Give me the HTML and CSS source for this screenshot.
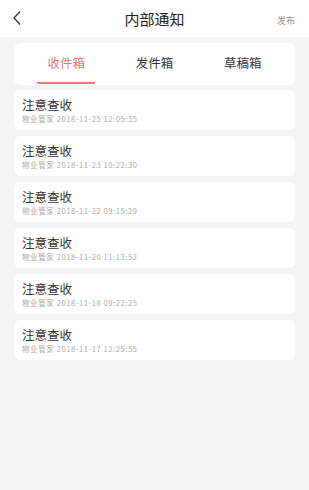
FILE: index.html
```html
<!DOCTYPE html>
<html>
<head>
<meta charset="utf-8">
<link rel="stylesheet" href="styles.css">
</head>
<body>
<div class="header">
  <svg class="back" width="10" height="16" viewBox="0 0 10 16"><path d="M8 1.5 L2 8 L8 14.5" fill="none" stroke="#333" stroke-width="1.3"/></svg>
  <div class="title">内部通知</div>
  <div class="publish">发布</div>
</div>
<div class="main">
  <div class="tabs">
    <div class="tab active"><span>收件箱</span></div>
    <div class="tab"><span>发件箱</span></div>
    <div class="tab"><span>草稿箱</span></div>
  </div>
  <div class="list">
    <div class="item"><div class="t">注意查收</div><div class="s">物业管家 2018-11-25 12:05:35</div></div>
    <div class="item"><div class="t">注意查收</div><div class="s">物业管家 2018-11-23 10:22:30</div></div>
    <div class="item"><div class="t">注意查收</div><div class="s">物业管家 2018-11-22 09:15:29</div></div>
    <div class="item"><div class="t">注意查收</div><div class="s">物业管家 2018-11-20 11:13:52</div></div>
    <div class="item"><div class="t">注意查收</div><div class="s">物业管家 2018-11-18 09:22:25</div></div>
    <div class="item"><div class="t">注意查收</div><div class="s">物业管家 2018-11-17 12:25:55</div></div>
  </div>
</div>
</body>
</html>
```
FILE: styles.css
```css
html, body { margin: 0; padding: 0; }
body {
  width: 309px; height: 490px;
  background: #f4f4f4;
  font-family: "Noto Sans CJK SC", "Noto Sans", sans-serif;
  overflow: hidden;
}
.header {
  height: 37px;
  background: #fff;
  display: flex;
  align-items: center;
  justify-content: space-between;
  padding: 0 14px 0 12px;
  position: relative;
}
.back { display: block; margin-top: -2px; }
.title {
  position: absolute; left: 0; right: 0; top: 0;
  text-align: center;
  line-height: 37px;
  font-size: 15px;
  color: #222;
  pointer-events: none;
}
.publish { font-size: 9px; color: #999; margin-top: 4px; }
.main { padding: 6px 14px 0 14px; }
.tabs {
  height: 42px;
  background: #fff;
  border-radius: 7px;
  display: flex;
  padding: 0 8px;
}
.tab {
  flex: 1;
  display: flex;
  justify-content: center;
}
.tab span {
  display: block;
  width: 58px;
  text-align: center;
  font-size: 12.5px;
  color: #333;
  line-height: 40px;
  height: 39px;
  border-bottom: 2px solid transparent;
}
.tab.active span { color: #e8777a; border-bottom-color: #e8777a; }
.list {
  margin-top: 5px;
  display: flex;
  flex-direction: column;
  gap: 6px;
}
.item {
  height: 40px;
  background: #fff;
  border-radius: 6px;
  padding: 0 8px;
  box-sizing: border-box;
  display: flex;
  flex-direction: column;
  justify-content: center;
}
.t { font-size: 12.5px; color: #333; line-height: 16px; }
.s { font-size: 7.5px; color: #aaa; line-height: 11px; letter-spacing: 0.6px; }
```
